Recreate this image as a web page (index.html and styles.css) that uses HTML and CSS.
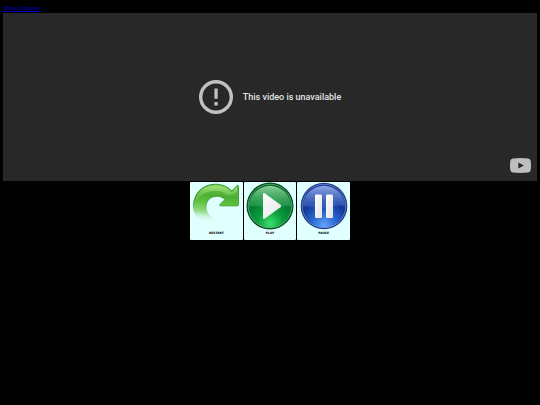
FILE: index.html
```
<!DOCTYPE html>
<html lang="en">
<head>
    <meta charset="UTF-8">
    <meta name="viewport" content="width=device-width, initial-scale=1.0">
    <title>Video Player</title>
    <link rel="stylesheet" href="styles.css">
</head>
<body>

<a class="options-link" href="#options">Show Options</a>

<!-- Video -->
<div class="player">
    <div class="message">
        <svg class="alert-icon" viewBox="0 0 34 34">
            <circle cx="17" cy="17" r="15.3" fill="none" stroke="#c1c1c1" stroke-width="3.4"/>
            <path d="M15.4 8.5h3.3v10.2h-3.3zM15.4 22h3.3v3.4h-3.3z" fill="#c1c1c1"/>
        </svg>
        <span>This video is unavailable</span>
    </div>
    <a class="watch-link" href="#watch" aria-label="Watch video">
        <svg viewBox="0 0 21 15">
            <path d="M3 .4Q10.500-.4 18 .4 20.400.6 20.700 3 21.300 7.500 20.700 12 20.400 14.400 18 14.600 10.500 15.400 3 14.600.6 14.400.3 12-.3 7.500.3 3 .6.6 3 .4z" fill="#bebebe"/>
            <path d="M8.300 4.400v6.200l5.600-3.100z" fill="#282828"/>
        </svg>
    </a>
</div>

<!-- Controls -->
<div class="controls">
    <button type="button" class="control">
        <svg viewBox="0 0 48 48">
            <defs>
                <linearGradient id="arrowFill" gradientUnits="userSpaceOnUse" x1="24" y1="2" x2="20" y2="41">
                    <stop offset="0" stop-color="#6cc74b"/>
                    <stop offset=".3" stop-color="#4bae33"/>
                    <stop offset=".5" stop-color="#5fc33d"/>
                    <stop offset=".72" stop-color="#86d26e" stop-opacity=".85"/>
                    <stop offset="1" stop-color="#e0ffff" stop-opacity="0"/>
                </linearGradient>
                <linearGradient id="arrowEdge" gradientUnits="userSpaceOnUse" x1="0" y1="2" x2="0" y2="34">
                    <stop offset="0" stop-color="#27871d"/>
                    <stop offset=".65" stop-color="#3a9c2b"/>
                    <stop offset="1" stop-color="#8fd080" stop-opacity="0"/>
                </linearGradient>
                <linearGradient id="arrowShine" x1="0" y1="0" x2="0" y2="1">
                    <stop offset="0" stop-color="#b6ed91" stop-opacity=".7"/>
                    <stop offset="1" stop-color="#8bd765" stop-opacity=".1"/>
                </linearGradient>
            </defs>
            <path d="M15 42C6 39.500 1.500 32 1.500 24 1.500 11 11 2.200 23.500 2.200 30.500 2.200 36 5 40 9L45 3.500Q46.500 2.800 46.500 4.500V22.500Q46.500 24 45 24H28.500Q26.800 23.500 28 22.300L33 17.500C30.500 15 27.500 14.200 24.500 14.300 18.500 14.500 14 19 14 24.500 14 30 17 34 22 36 20.500 39 18 41 15 42z" fill="url(#arrowFill)" stroke="url(#arrowEdge)" stroke-width=".8"/>
            <path d="M3 20C5 9 13 3.500 23.500 3.500 30.500 3.500 36 6 40 10.500L45 5V9C39 14 36 14 32 11 24 6 11 9 3 20z" fill="url(#arrowShine)"/>
        </svg>
        <span>RESTART</span>
    </button>
    <button type="button" class="control">
        <svg viewBox="0 0 48 48">
            <defs>
                <radialGradient id="greenFill" cx=".5" cy=".9" r=".85">
                    <stop offset="0" stop-color="#39df6d"/>
                    <stop offset=".35" stop-color="#0b9b3e"/>
                    <stop offset=".75" stop-color="#047130"/>
                    <stop offset="1" stop-color="#045927"/>
                </radialGradient>
                <linearGradient id="greenShine" x1="0" y1="0" x2="0" y2="1">
                    <stop offset="0" stop-color="#a1e8ac" stop-opacity=".85"/>
                    <stop offset="1" stop-color="#43bb63" stop-opacity=".3"/>
                </linearGradient>
                <linearGradient id="symbolFill" x1="0" y1="0" x2="1" y2="1">
                    <stop offset="0" stop-color="#fff"/>
                    <stop offset="1" stop-color="#e0e2e4"/>
                </linearGradient>
            </defs>
            <circle cx="24" cy="24" r="23.500" fill="#02491f"/>
            <circle cx="24" cy="24" r="21.800" fill="url(#greenFill)" stroke="#6bc781" stroke-width=".7"/>
            <path d="M2.800 25A21.200 21.200 0 0 1 45.200 25C36 21 29 28 20 26 12 24 7 23 2.800 25z" fill="url(#greenShine)"/>
            <path d="M17 12.500Q17 10.300 19 11.500L34.500 22.800Q36 24 34.500 25.300L19 36.500Q17 37.700 17 35.500z" fill="url(#symbolFill)"/>
        </svg>
        <span>PLAY</span>
    </button>
    <button type="button" class="control">
        <svg viewBox="0 0 48 48">
            <defs>
                <radialGradient id="blueFill" cx=".5" cy=".95" r=".9">
                    <stop offset="0" stop-color="#5ea6fa"/>
                    <stop offset=".35" stop-color="#2862cb"/>
                    <stop offset=".65" stop-color="#153796"/>
                    <stop offset="1" stop-color="#183b9b"/>
                </radialGradient>
                <linearGradient id="blueShine" x1="0" y1="0" x2="0" y2="1">
                    <stop offset="0" stop-color="#a5baf2" stop-opacity=".85"/>
                    <stop offset="1" stop-color="#4d70cd" stop-opacity=".35"/>
                </linearGradient>
            </defs>
            <circle cx="24" cy="24" r="23.300" fill="#1b3578"/>
            <circle cx="24" cy="24" r="21.800" fill="url(#blueFill)" stroke="#7294df" stroke-width=".7"/>
            <path d="M2.800 25A21.200 21.200 0 0 1 45.200 25C36 21 29 27 20 26 12 25 7 23 2.800 25z" fill="url(#blueShine)"/>
            <rect x="15" y="12.500" width="7" height="23.500" rx="1.200" fill="url(#symbolFill)"/>
            <rect x="26" y="12.500" width="7" height="23.500" rx="1.200" fill="url(#symbolFill)"/>
        </svg>
        <span>PAUSE</span>
    </button>
</div>

</body>
</html>
```
FILE: styles.css
```
body {
    background-color: #000;
    font-family: "Liberation Sans", Arial, sans-serif;
    margin: 0;
    padding: 4px 3px;
}

.options-link {
    display: block;
    width: fit-content;
    color: #0000c8;
    font-size: 6px;
    line-height: 9px;
}

/* Video */
.player {
    position: relative;
    display: flex;
    justify-content: center;
    align-items: center;
    min-height: 168px;
    background-color: #282828;
}

.message {
    display: flex;
    align-items: center;
    gap: 10px;
    color: #e3e3e3;
    font-family: Roboto, sans-serif;
    font-size: 9px;
    font-weight: 500;
}

.alert-icon {
    width: 34px;
    height: 34px;
}

.watch-link {
    position: absolute;
    right: 6px;
    bottom: 8px;
}

.watch-link svg {
    display: block;
    width: 21px;
    height: 15px;
}

/* Controls */
.controls {
    display: flex;
    gap: 1px;
    max-width: 160px;
    margin: 0 auto;
    padding-top: 1px;
}

.control {
    display: flex;
    flex: 1;
    flex-direction: column;
    align-items: center;
    gap: 1px;
    height: 58px;
    padding: 0;
    border: none;
    border-radius: 1px;
    background-color: #e0ffff;
    color: #000;
    font-family: "DejaVu Sans", sans-serif;
    font-size: 3px;
    font-weight: bold;
    line-height: 5px;
    cursor: pointer;
}

.control svg {
    width: 48px;
    height: 48px;
}
```
